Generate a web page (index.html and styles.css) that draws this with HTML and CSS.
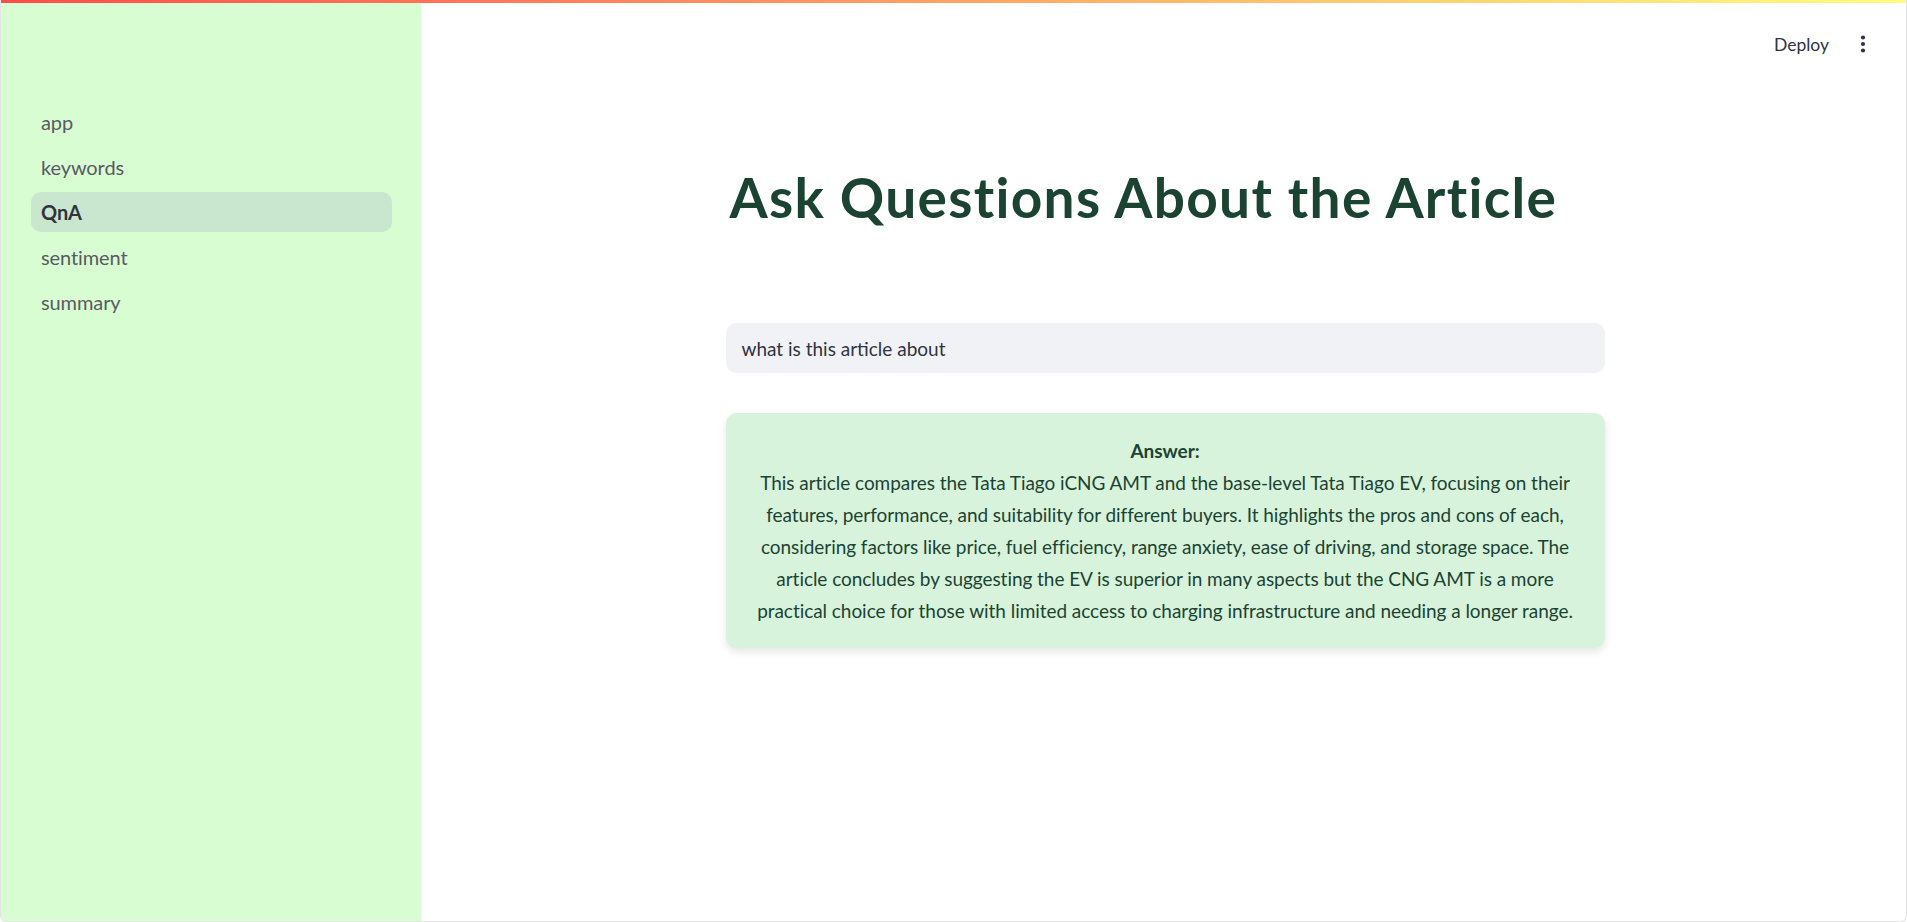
FILE: index.html
```html
<!DOCTYPE html>
<html lang="en">
<head>
<meta charset="utf-8">
<title>QnA</title>
<link rel="stylesheet" href="styles.css">
</head>
<body>
<div class="app">
  <div class="decoration"></div>
  <div class="shell">
    <aside class="sidebar">
      <nav class="nav">
        <a class="nav-item">app</a>
        <a class="nav-item">keywords</a>
        <a class="nav-item active">QnA</a>
        <a class="nav-item">sentiment</a>
        <a class="nav-item">summary</a>
      </nav>
    </aside>
    <main class="main">
      <header class="header">
        <span class="deploy">Deploy</span>
        <span class="menu">
          <svg width="6" height="20" viewBox="0 0 6 20"><circle cx="3" cy="3.5" r="2.1" fill="#31333f"/><circle cx="3" cy="10" r="2.1" fill="#31333f"/><circle cx="3" cy="16.5" r="2.1" fill="#31333f"/></svg>
        </span>
      </header>
      <section class="content">
        <h1 class="title">Ask Questions About the Article</h1>
        <div class="input">what is this article about</div>
        <div class="answer">
          <strong class="answer-label">Answer:</strong><br>
          This article compares the Tata Tiago iCNG AMT and the base-level Tata Tiago EV, focusing on their features, performance, and suitability for different buyers. It highlights the pros and cons of each, considering factors like price, fuel efficiency, range anxiety, ease of driving, and storage space. The article concludes by suggesting the EV is superior in many aspects but the CNG AMT is a more practical choice for those with limited access to charging infrastructure and needing a longer range.
        </div>
      </section>
    </main>
  </div>
</div>
</body>
</html>
```

FILE: styles.css
```css
* { box-sizing: border-box; }
html, body { margin: 0; padding: 0; height: 100%; }
body {
  font-family: "Lato", "Liberation Sans", sans-serif;
  color: #31333f;
  background: #ffffff;
}
.app {
  height: 922px;
  display: flex;
  flex-direction: column;
  border: 1px solid #e4e4e4;
  border-top: none;
  border-radius: 0 0 6px 6px;
  overflow: hidden;
}
.decoration {
  height: 3px;
  flex: none;
  background: linear-gradient(90deg, #ff4b4b, #fffd80);
}
.shell {
  flex: 1;
  display: flex;
  min-height: 0;
}
.sidebar {
  width: 420px;
  flex: none;
  background: #d9fdd3;
  padding: 99px 29px 0 30px;
}
.nav {
  display: flex;
  flex-direction: column;
  gap: 5px;
}
.nav-item {
  height: 40px;
  display: flex;
  align-items: center;
  padding: 0 10px;
  border-radius: 10px;
  font-size: 20px;
  color: #585b5f;
  letter-spacing: -0.1px;
}
.nav-item.active {
  background: #c9e7cf;
  color: #31333f;
  font-weight: 700;
}
.main {
  flex: 1;
  display: flex;
  flex-direction: column;
  padding-left: 3px;
}
.header {
  height: 60px;
  display: flex;
  justify-content: flex-end;
  align-items: center;
  gap: 31px;
  padding: 11px 40px 0 0;
  box-sizing: content-box;
}
.deploy {
  font-size: 17.5px;
  color: #31333f;
}
.menu {
  display: flex;
  align-items: center;
}
.content {
  width: 879px;
  margin: 0 auto;
}
.title {
  margin: 0;
  padding: 90px 0 0 4px;
  font-size: 55px;
  line-height: 66px;
  font-weight: 700;
  color: #1b4332;
  letter-spacing: 1.3px;
}
.input {
  margin-top: 93px;
  height: 50px;
  background: #f0f2f6;
  border-radius: 10px;
  padding: 0 16px;
  display: flex;
  align-items: center;
  font-size: 19px;
  color: #31333f;
}
.answer {
  margin-top: 40px;
  background: #d8f3dc;
  border-radius: 11px;
  box-shadow: 0 4px 8px rgba(0, 0, 0, 0.1);
  padding: 22px 20px 21px;
  text-align: center;
  font-size: 19px;
  line-height: 32px;
  color: #1b4332;
  letter-spacing: -0.05px;
}
.answer-label {
  font-weight: 700;
}
```
